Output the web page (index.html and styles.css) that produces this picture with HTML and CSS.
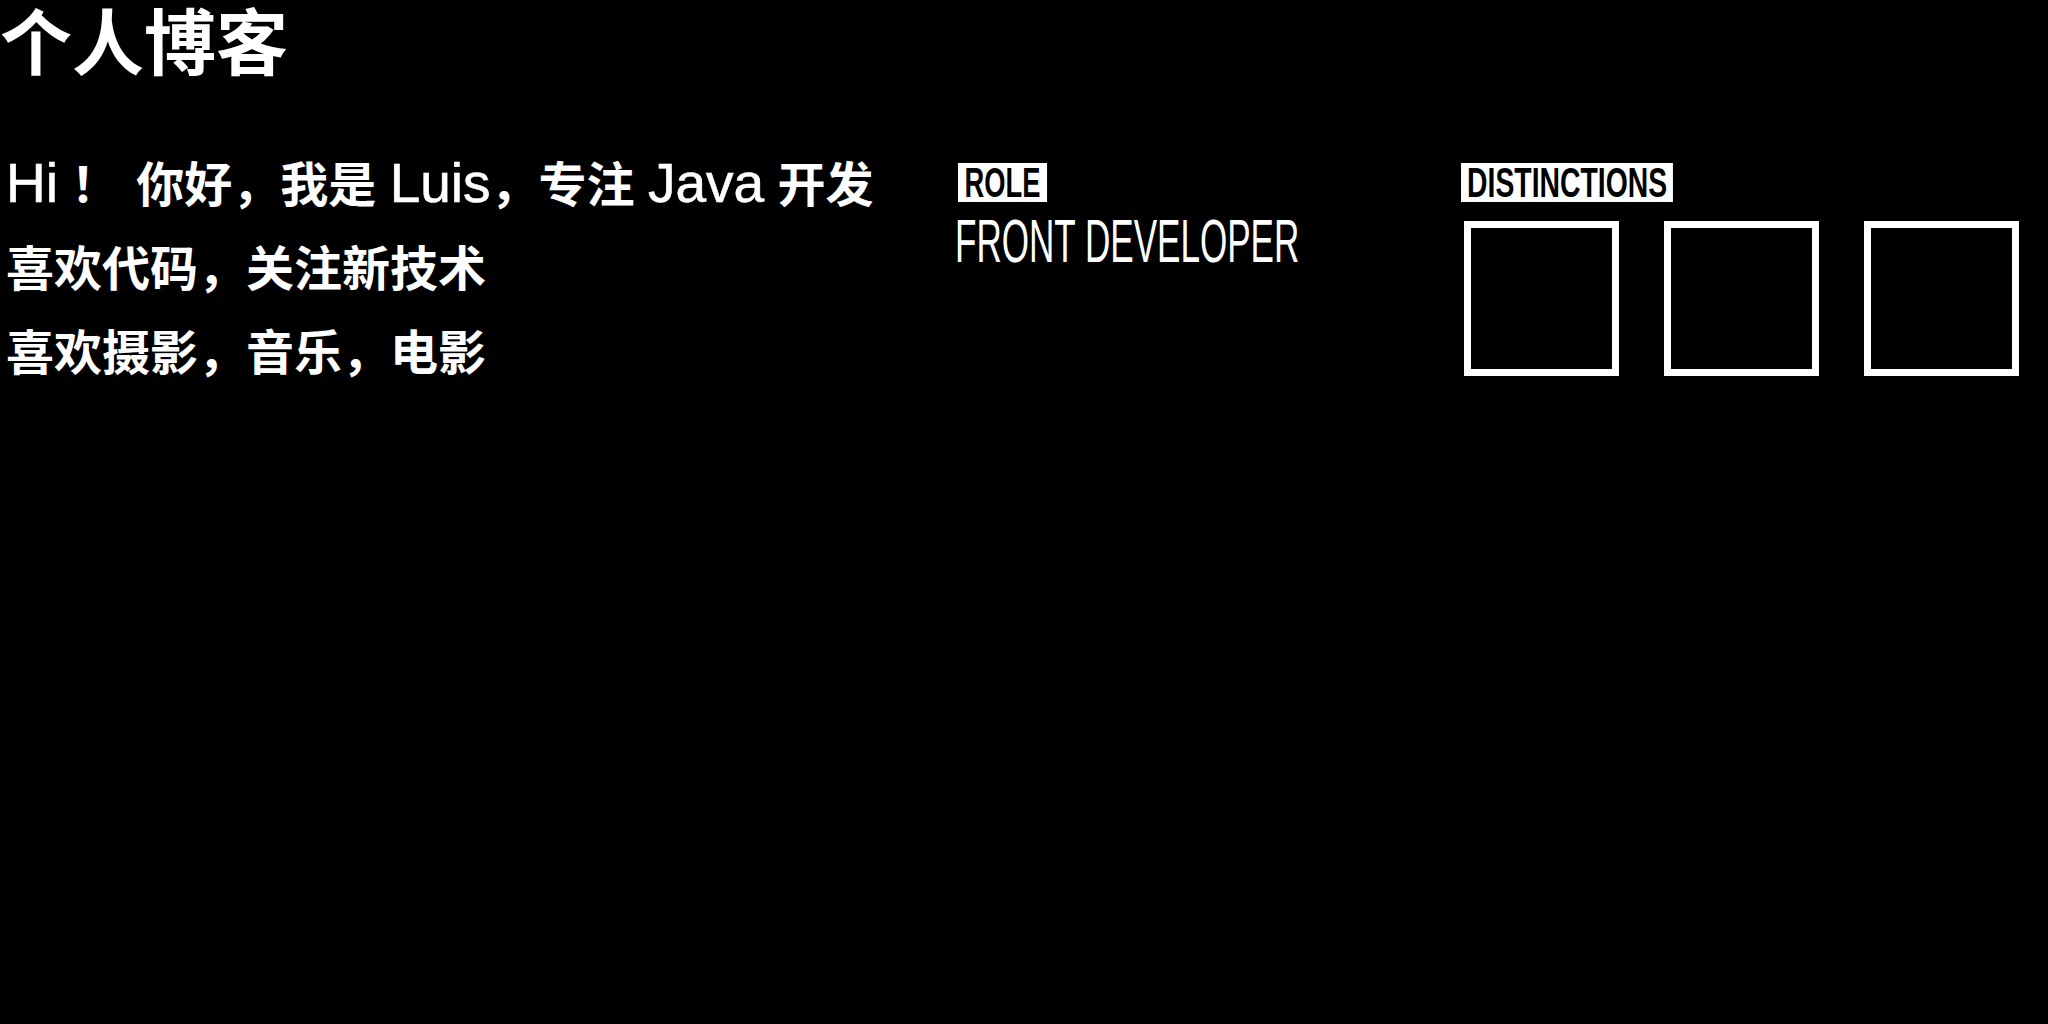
FILE: index.html
```html
<!DOCTYPE html>
<html lang="zh-CN">
<head>
<meta charset="utf-8">
<title>个人博客</title>
<link rel="stylesheet" href="styles.css">
</head>
<body>
<h1 class="title">个人博客</h1>
<main class="profile">
  <section class="intro">
    <p><span class="en">Hi</span><span class="bang">！</span> 你好，我是 <span class="en">Luis</span>，专注 <span class="en">Java</span> 开发</p>
    <p>喜欢代码，关注新技术</p>
    <p>喜欢摄影，音乐，电影</p>
  </section>
  <section class="role">
    <span class="tag tag-role">ROLE</span>
    <p class="role-name">FRONT DEVELOPER</p>
  </section>
  <section class="distinctions">
    <span class="tag tag-dist">DISTINCTIONS</span>
    <ul class="badges">
      <li class="badge"></li>
      <li class="badge"></li>
      <li class="badge"></li>
    </ul>
  </section>
</main>
</body>
</html>
```
FILE: styles.css
```css
html, body {
  background: #000;
}
body {
  margin: 0;
  color: #fff;
  font-family: "Liberation Sans", "Noto Sans CJK SC", sans-serif;
}
.title {
  margin: 0 0 68px;
  font-family: "Noto Sans CJK SC", sans-serif;
  font-size: 72px;
  line-height: 76px;
  font-weight: 700;
}
.profile {
  display: grid;
  grid-template-columns: 958px 503px 1fr;
}
.intro {
  padding-left: 6px;
}
.intro p {
  margin: 0;
  font-size: 48px;
  line-height: 84px;
  font-weight: 700;
  white-space: nowrap;
}
.en {
  font-size: 55px;
  line-height: 1;
  font-weight: 400;
  -webkit-text-stroke: 0.6px currentColor;
}
.bang {
  margin: 0 4px 0 13px;
}
.role,
.distinctions {
  display: flex;
  flex-direction: column;
  align-items: flex-start;
  padding-top: 19px;
}
.tag {
  display: block;
  background: #fff;
  color: #000;
  font-weight: 700;
  font-size: 42px;
  line-height: 39px;
  white-space: nowrap;
  transform-origin: left center;
}
.tag-role {
  padding: 0 10px;
  transform: scaleX(0.65);
}
.tag-dist {
  padding: 0 9px;
  transform: scaleX(0.675);
}
.role-name {
  margin: 8px 0 0 -3px;
  font-size: 61px;
  line-height: 62px;
  font-weight: 400;
  white-space: nowrap;
  transform: scaleX(0.575);
  transform-origin: left center;
}
.badges {
  display: flex;
  gap: 45px;
  margin: 19px 0 0 3px;
  padding: 0;
  list-style: none;
}
.badge {
  width: 155px;
  height: 155px;
  box-sizing: border-box;
  border: 7px solid #fff;
}
```
